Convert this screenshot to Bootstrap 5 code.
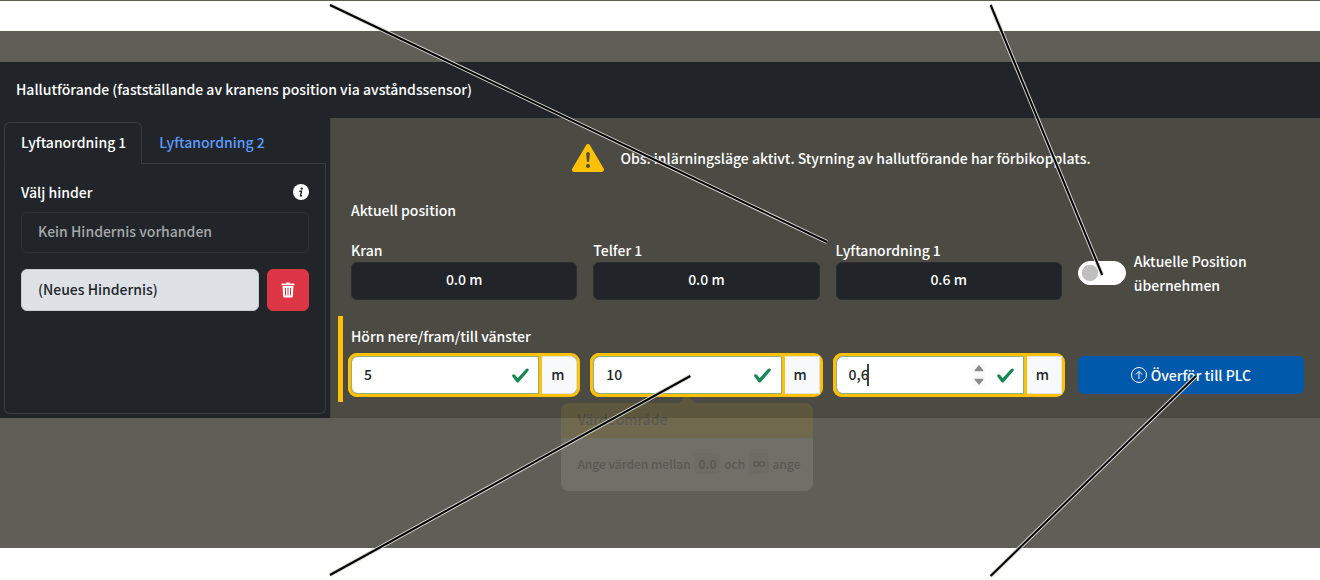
<!DOCTYPE html>
<html lang="sv" data-bs-theme="light">
<head>
<meta charset="utf-8">
<meta name="viewport" content="width=device-width, initial-scale=1">
<title>Hallutförande</title>
<link href="https://cdn.jsdelivr.net/npm/bootstrap@5.3.0/dist/css/bootstrap.min.css" rel="stylesheet">
<style>
  body { font-family: "Noto Sans CJK JP", "Noto Sans", sans-serif; font-size: 14px; font-weight: 500; line-height: 24px; background: #fff; color: #fff; }
  .stage { border-top: 1px solid #605f57; padding-bottom: 31px; }
  .backdrop { margin-top: 30px; padding-top: 31px; padding-bottom: 130px; background: #605f57; }
  .titlebar { padding: 15px 16px 17px; min-height: 56px; background: #212529; }
  .side { width: 25%; padding: 4px; background: #212529; }
  .workspace { padding: 24px 16px 16px 20px; background: #4b4b44; border-left: 1px solid #42423d; }
  .side .nav-tabs { --bs-nav-tabs-border-color: #393d41; --bs-nav-tabs-link-active-bg: #212529; --bs-nav-tabs-link-active-color: #fff; --bs-nav-tabs-link-active-border-color: #393d41 #393d41 #212529; --bs-nav-link-color: #5d9bff; --bs-nav-link-hover-color: #8bb9fe; --bs-nav-tabs-link-hover-border-color: transparent; --bs-nav-link-font-weight: 500; }
  .side .nav-link { padding: 7px 15px 9px 16px; }
  .tabbox { padding: 16px; border: 1px solid #393d41; border-top: 0; border-radius: 0 0 6px 6px; }
  .empty-note { height: 41px; padding: 6px 16px; border: 1px solid #2d3135; border-radius: 6px; color: #a5a8aa; }
  .new-item { height: 42px; background: #dee2e6; border: 1px solid #c8ccd0; border-radius: 6px; color: #212529; text-align: left; padding: 7px 16px 9px; font-weight: 500; line-height: 24px; }
  .bin { width: 42px; height: 42px; padding: 0; }
  .fields { display: grid; grid-template-columns: repeat(4, minmax(0, 1fr)); gap: 16px; }
  .reading { display: block; padding: 4px 12px; height: 38px; border: 1px solid #2b2e30; border-radius: 6px; background: #212529; text-align: center; }
  .takeover .form-check-input { width: 48px; height: 24px; margin: 0; background-color: #fff; border-color: #fff; flex: none; }
  .corner { margin-left: -13px; padding: 8px 0 8px 8px; border-left: 5px solid #ffc107; }
  .dimension { height: 38px; border-radius: 6px; box-shadow: 0 0 0 3px #ffc107; }
  .dimension .form-control, .dimension .form-control:focus { font-size: 14px; font-weight: 500; line-height: 24px; padding-top: 5px; padding-bottom: 7px; border-color: #8fae83; box-shadow: 0 0 0 3px #ffc107; z-index: 1; color: #212529; background-size: 19px 19px; }
  .dimension .input-group-text { width: 39px; justify-content: center; font-size: 14px; font-weight: 500; padding: 0 0 2px; color: #212529; background: #f8f9fa; }
  .spinner { position: absolute; right: 76px; top: 8px; z-index: 6; background: #fafafa; }
  .caret { position: absolute; left: 32px; top: 8px; width: 2px; height: 22px; background: #3c4145; z-index: 6; }
  .send { height: 38px; background: #0059ab; font-size: 14px; font-weight: 500; line-height: 24px; padding: 6px 12px; color: #fff; border: 0; }
  .range-tip { position: absolute; top: 47px; left: calc(50% - 144px); width: 252px; opacity: .1; color: #212529; z-index: 7; }
  .range-tip::before { content: ""; position: absolute; left: 118px; top: -8px; border: 8px solid transparent; border-top: 0; border-bottom-color: #ffc107; }
  .tip-head { height: 35px; padding: 4px 16px; background: #ffc107; border-radius: 8px 8px 0 0; }
  .tip-text { height: 53px; padding: 14px 0 14px 16px; background: #fff; border-radius: 0 0 8px 8px; font-size: 12px; white-space: nowrap; }
  .tip-text b { padding: 2px 4px; margin: 0 1px; background: #d5d8db; border-radius: 4px; }
  .pointers { position: absolute; top: 0; left: 0; width: 100%; height: 100%; z-index: 9; pointer-events: none; }
</style>
</head>
<body>
<div class="stage position-relative">
  <div class="backdrop">
    <header class="titlebar">Hallutförande (fastställande av kranens position via avståndssensor)</header>
    <div class="d-flex">
      <aside class="side d-flex flex-column flex-shrink-0">
        <ul class="nav nav-tabs" role="tablist">
          <li class="nav-item" role="presentation"><button class="nav-link active" type="button" role="tab" aria-selected="true">Lyftanordning 1</button></li>
          <li class="nav-item" role="presentation"><button class="nav-link" type="button" role="tab" aria-selected="false">Lyftanordning 2</button></li>
        </ul>
        <div class="tabbox flex-grow-1">
          <div class="d-flex justify-content-between align-items-center mb-2">
            <span>Välj hinder</span>
            <svg width="16" height="16" viewBox="0 0 16 16" role="img" aria-label="Info"><circle cx="8" cy="8" r="8" fill="#fff"/><circle cx="8.700" cy="4.600" r="1.200" fill="#212529"/><path d="M6.300 7.300h2.200l-1 4.500h1.600" fill="none" stroke="#212529" stroke-width="1.400"/></svg>
          </div>
          <div class="empty-note mb-3">Kein Hindernis vorhanden</div>
          <div class="d-flex gap-2">
            <button type="button" class="new-item flex-grow-1">(Neues Hindernis)</button>
            <button type="button" class="btn btn-danger bin d-flex align-items-center justify-content-center" aria-label="Löschen">
              <svg width="16" height="16" viewBox="0 0 16 16"><path d="M1.500 2.200q0-.8.8-.8H6L6.500.5h3l.5.9h3.700q.8 0 .8.8v1h-13zM2.500 4h11l-.6 10q-.1 1.500-1.500 1.500H4.600q-1.400 0-1.500-1.500z" fill="#fff"/><path d="M5.500 6v7.500M8 6v7.500M10.500 6v7.500" stroke="#dc3545" stroke-width="1" fill="none"/></svg>
            </button>
          </div>
        </div>
      </aside>

      <main class="workspace flex-grow-1">
        <div class="d-flex justify-content-center align-items-center gap-3 mb-4 ps-2" role="alert">
          <svg width="32" height="32" viewBox="0 0 16 16" fill="#ffc107"><path d="M8.982 1.566a1.13 1.13 0 0 0-1.960 0L.165 13.233c-.457.778.091 1.767.98 1.767h13.713c.889 0 1.438-.99.98-1.767zM8 5c.535 0 .954.462.9.995l-.35 3.507a.552.552 0 0 1-1.100 0L7.100 5.995A.905.905 0 0 1 8 5m.002 6a1 1 0 1 1 0 2 1 1 0 0 1 0-2"/></svg>
          <span>Obs: inlärningsläge aktivt. Styrning av hallutförande har förbikopplats.</span>
        </div>
        <div class="mb-3">Aktuell position</div>
        <div class="fields mb-3">
          <div><label for="kran" class="d-block">Kran</label><output id="kran" class="reading">0.0 m</output></div>
          <div><label for="telfer" class="d-block">Telfer 1</label><output id="telfer" class="reading">0.0 m</output></div>
          <div><label for="lyft" class="d-block">Lyftanordning 1</label><output id="lyft" class="reading">0.6 m</output></div>
          <div class="takeover form-switch d-flex align-items-center gap-2 ps-0 pt-2">
            <input class="form-check-input" type="checkbox" role="switch" id="takeover">
            <label for="takeover">Aktuelle Position übernehmen</label>
          </div>
        </div>
        <section class="corner">
          <div class="mb-2" id="cornerlabel">Hörn nere/fram/till vänster</div>
          <div class="fields">
            <div class="input-group dimension flex-nowrap"><input class="form-control is-valid" value="5" aria-labelledby="cornerlabel"><span class="input-group-text">m</span></div>
            <div class="input-group dimension flex-nowrap"><input class="form-control is-valid" value="10" aria-labelledby="cornerlabel"><span class="input-group-text">m</span>
              <div class="range-tip" role="tooltip">
                <div class="tip-head">Värdeområde</div>
                <div class="tip-text">Ange värden mellan <b>0.0</b> och <b>∞</b> ange</div>
              </div>
            </div>
            <div class="input-group dimension flex-nowrap"><input class="form-control is-valid" value="0,6" inputmode="decimal" aria-labelledby="cornerlabel"><span class="input-group-text">m</span>
              <span class="caret"></span>
              <svg class="spinner" width="14" height="22" viewBox="0 0 14 22" fill="#8b8b8b"><path d="M7 1l4.300 5v1.300H2.700V6zM7 21l4.300-5v-1.300H2.700V16z"/></svg>
            </div>
            <button type="button" class="btn send d-flex justify-content-center align-items-center gap-1">
              <svg width="16" height="16" viewBox="0 0 16 16" fill="none" stroke="#fff"><circle cx="8" cy="8" r="7.500"/><path d="M8 12V4.500M4.800 7.500L8 4.300l3.200 3.200"/></svg>
              <span>Överför till PLC</span>
            </button>
          </div>
        </section>
      </main>
    </div>
  </div>
  <!-- Leader lines towards the explained controls -->
  <svg class="pointers" aria-hidden="true">
    <g stroke="#d4d4d0" stroke-width="4">
      <line x1="25%" y1="4" x2="62.65%" y2="241"/><line x1="75.05%" y1="4" x2="83.5%" y2="274"/>
      <line x1="25%" y1="574" x2="52.3%" y2="375"/><line x1="75.05%" y1="575" x2="90.6%" y2="375"/>
    </g>
    <g stroke="#000" stroke-width="2">
      <line x1="25%" y1="4" x2="62.65%" y2="241"/><line x1="75.05%" y1="4" x2="83.5%" y2="274"/>
      <line x1="25%" y1="574" x2="52.3%" y2="375"/><line x1="75.05%" y1="575" x2="90.6%" y2="375"/>
    </g>
  </svg>
</div>
<script src="https://cdn.jsdelivr.net/npm/bootstrap@5.3.0/dist/js/bootstrap.bundle.min.js"></script>
</body>
</html>
